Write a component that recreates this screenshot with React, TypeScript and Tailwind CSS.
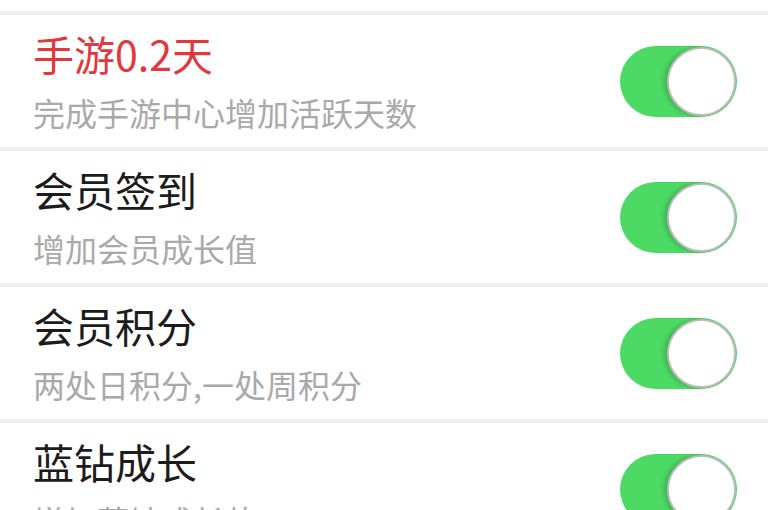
import React from 'react';

const rows = [
  { title: '手游0.2天', desc: '完成手游中心增加活跃天数', red: true },
  { title: '会员签到', desc: '增加会员成长值' },
  { title: '会员积分', desc: '两处日积分,一处周积分' },
  { title: '蓝钻成长', desc: '增加蓝钻成长值' },
];

function Toggle() {
  return (
    <div className="flex h-[71px] w-[117px] shrink-0 items-center justify-end rounded-full bg-[#4cd964] p-[1px]">
      <div className="h-[69px] w-[69px] rounded-full border-2 border-[#bdbdbd] bg-white shadow-[-3px_0_4px_rgba(0,0,0,0.18)]" />
    </div>
  );
}

export default function App() {
  return (
    <div
      className="h-[510px] w-[768px] overflow-hidden bg-white"
      style={{ fontFamily: '"Noto Sans CJK SC", "Noto Sans", sans-serif' }}
    >
      <div className="h-[11px]" />
      {rows.map((row) => (
        <div
          key={row.title}
          className="flex h-[136px] items-center justify-between border-t-4 border-[#eeeeee] pl-[33px] pr-[31px]"
        >
          <div className="flex flex-col pb-[1px]">
            <span
              className={`text-[41px] leading-none ${row.red ? 'text-[#e3373e]' : 'text-[#1c1c1c]'}`}
            >
              {row.title}
            </span>
            <span className="mt-[22px] text-[32px] leading-none text-[#a9a9a9]">
              {row.desc}
            </span>
          </div>
          <Toggle />
        </div>
      ))}
    </div>
  );
}
